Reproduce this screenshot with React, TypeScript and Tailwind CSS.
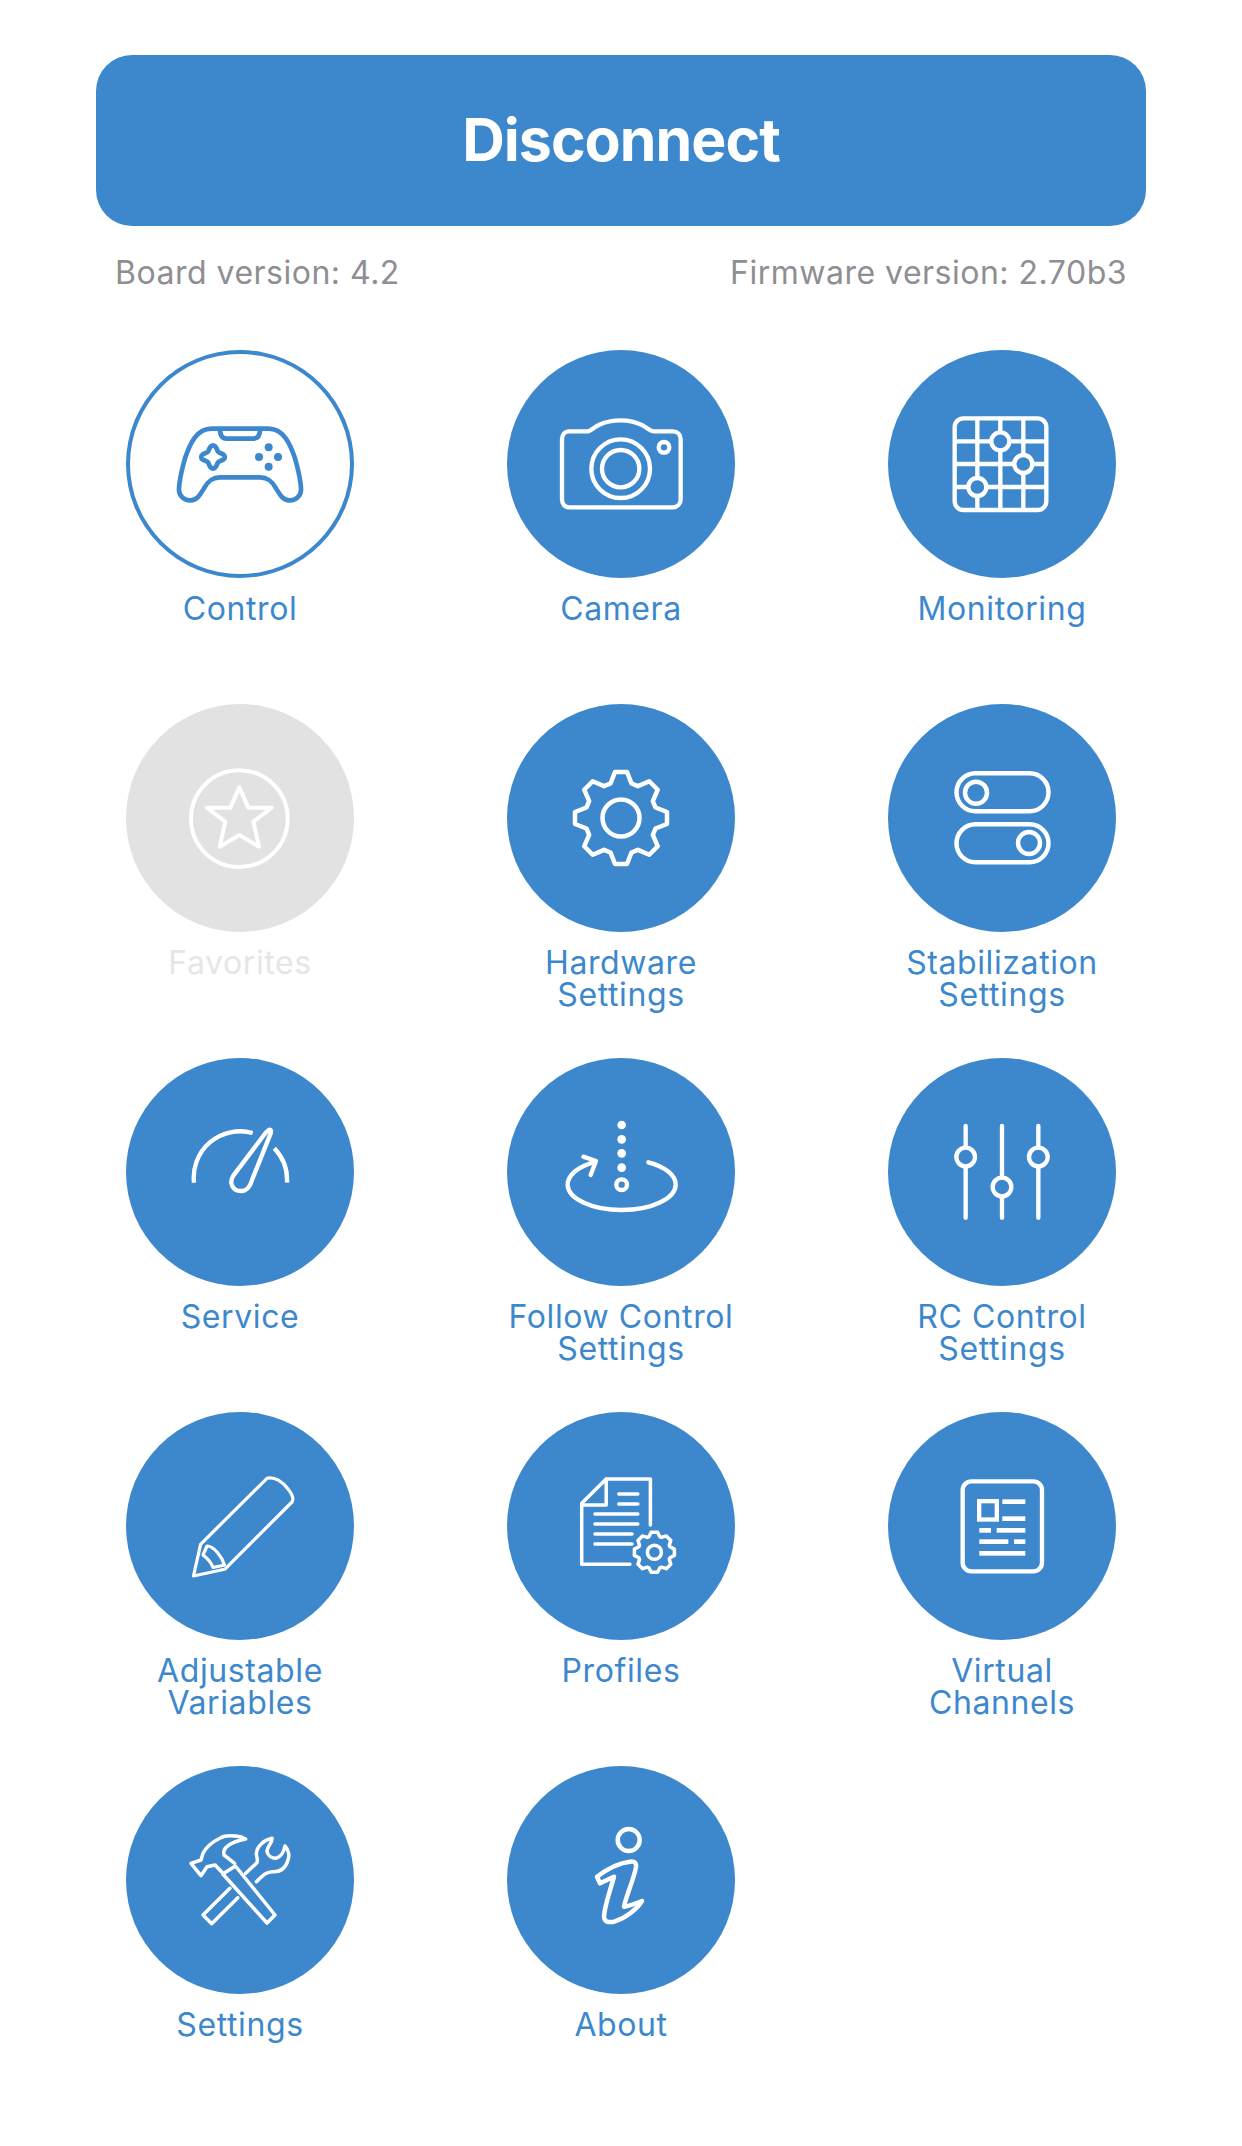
import React from "react";

const BLUE = "#3d88cd";

function gearPath(cx: number, cy: number, ro: number, ri: number, teeth: number, tip: number, base: number) {
  const step = (Math.PI * 2) / teeth;
  const pts: string[] = [];
  for (let i = 0; i < teeth; i++) {
    const a = -Math.PI / 2 + i * step;
    const px = (r: number, o: number) => {
      const x = cx + r * Math.cos(a) - o * Math.sin(a);
      const y = cy + r * Math.sin(a) + o * Math.cos(a);
      return `${x.toFixed(2)} ${y.toFixed(2)}`;
    };
    pts.push(px(ri, -base), px(ro, -tip), px(ro, tip), px(ri, base));
  }
  return "M" + pts.join(" L") + " Z";
}

type SvgProps = { vb?: string; sw?: number; children: React.ReactNode; stroke?: string };
const Svg = ({ vb = "0 0 228 228", sw = 4, children, stroke = "#fff" }: SvgProps) => (
  <svg viewBox={vb} className="h-full w-full" fill="none" stroke={stroke} strokeWidth={sw} strokeLinecap="round" strokeLinejoin="round">
    {children}
  </svg>
);

const Gamepad = () => (
  <Svg vb="18 30 684 684" sw={14} stroke={BLUE}>
    <path d="M275 266H445C490 266 510 310 525 355C535 390 542 425 543 445C545 470 525 482 508 481C490 480 482 468 470 448C458 425 445 412 420 412H300C275 412 262 425 250 448C238 468 230 480 212 481C195 482 175 470 177 445C178 425 185 390 195 355C210 310 230 266 275 266Z" />
    <path d="M300 268C300 288 308 296 320 296H400C412 296 420 288 420 268" />
    <path d="M279 316C288 316 290 325 293 334C296 338 304 340 310 343C316 347 316 355 310 359C304 362 296 364 293 368C290 377 288 386 279 386C270 386 268 377 265 368C262 364 254 362 248 359C242 355 242 347 248 343C254 340 262 338 265 334C268 325 270 316 279 316Z" />
    <g fill={BLUE} stroke="none">
      <circle cx="446" cy="322" r="12" />
      <circle cx="417" cy="351" r="12" />
      <circle cx="474" cy="351" r="12" />
      <circle cx="446" cy="380" r="12" />
    </g>
  </Svg>
);

const Camera = () => (
  <Svg vb="21 30 684 684" sw={13}>
    <path d="M208 274H262C272 274 280 262 298 254C320 244 340 241 362 241C385 241 408 246 428 256C442 264 450 274 462 274H518C532 274 542 284 542 298V478C542 492 532 502 518 502H208C194 502 186 492 186 478V298C186 284 194 274 208 274Z" />
    <circle cx="362" cy="386" r="88" />
    <circle cx="362" cy="386" r="56" />
    <circle cx="492" cy="322" r="16" />
  </Svg>
);

const Monitor = () => (
  <Svg vb="24 30 684 684" sw={13}>
    <rect x="224" y="235" width="275" height="275" rx="26" />
    <path d="M292 235V510M361 235V510M430 235V510M224 304H499M224 372H499M224 441H499" strokeLinecap="butt" />
    <g fill={BLUE}>
      <circle cx="361" cy="304" r="27" />
      <circle cx="430" cy="372" r="27" />
      <circle cx="292" cy="441" r="27" />
    </g>
  </Svg>
);

const Star = () => (
  <Svg vb="18 12 684 684" sw={12}>
    <circle cx="358" cy="356" r="145" />
    <path d="M358 262L385 323L455 323L400 365L417 440L358 405L299 440L316 365L260 323L331 323Z" />
  </Svg>
);

const Gear = () => (
  <Svg sw={4.5}>
    <path d={gearPath(114, 114, 46, 34.5, 8, 6, 10.5)} />
    <circle cx="114" cy="114" r="18.5" />
  </Svg>
);

const Toggles = () => (
  <Svg sw={4.5}>
    <rect x="68.5" y="69.3" width="92" height="38" rx="19" />
    <rect x="68.5" y="120.3" width="92" height="38" rx="19" />
    <circle cx="88" cy="88.7" r="11" />
    <circle cx="141" cy="139" r="11" />
  </Svg>
);

const Gauge = () => (
  <Svg vb="18 9 684 684" sw={13}>
    <path d="M222 383A139 139 0 0 1 398 234M463 280A139 139 0 0 1 501 383" strokeLinecap="butt" />
    <path d="M450 224C445 222 438 232 432 240L340 362C325 385 340 408 362 408C385 408 392 388 398 370L452 235C454 228 453 224 450 224Z" />
  </Svg>
);

const Follow = () => (
  <Svg vb="21 9 684 684" sw={13}>
    <g fill="#fff" stroke="none">
      <circle cx="365" cy="210" r="13" />
      <circle cx="365" cy="253" r="13" />
      <circle cx="365" cy="295" r="13" />
      <circle cx="365" cy="338" r="13" />
    </g>
    <circle cx="365" cy="389" r="16" />
    <path d="M445 322C495 335 527 360 527 389C527 430 455 465 365 465C275 465 203 430 203 389C203 360 235 335 280 322" />
    <path d="M250 305L288 318L272 360" />
  </Svg>
);

const Sliders = () => (
  <Svg vb="24 9 684 684" sw={13}>
    <path d="M257 213V488M366 213V488M475 213V488" />
    <g fill={BLUE}>
      <circle cx="257" cy="306" r="28" />
      <circle cx="366" cy="396" r="28" />
      <circle cx="475" cy="306" r="28" />
    </g>
  </Svg>
);

const Pencil = () => (
  <Svg sw={3.2}>
    <path d="M67.5 164L74.6 132.3L141 66.3C148 64 157 70 162 77C166 82 168 87 166 90L98.7 157.3Z" />
    <path d="M77 143L81 134C88 134 96 145 98.5 153L87 155.5C85 150 81 146 77 143Z" />
  </Svg>
);

const Doc = () => (
  <Svg sw={3.5}>
    <path d="M122.9 152.3H74.7V91.3L99.2 67H143.4V113" />
    <path d="M99.2 67V93H74.7" />
    <path d="M111.8 82H130.8M111.8 92H130.8M88 102H130.8M88 112H130.8M88 122H125M88 132H125" />
    <path d={gearPath(147.4, 140.3, 20, 15.5, 8, 3.2, 5.5)} />
    <circle cx="147.4" cy="140.3" r="7" />
  </Svg>
);

const News = () => (
  <Svg vb="24 6 684 684" sw={13}>
    <rect x="248" y="214" width="238" height="270" rx="26" />
    <rect x="297.5" y="273.5" width="53" height="55" strokeLinejoin="miter" />
    <g fill="#fff" stroke="none">
      <rect x="367" y="268" width="69" height="14" />
      <rect x="367" y="319" width="69" height="14" />
      <rect x="298" y="354" width="35" height="14" />
      <rect x="350" y="354" width="86" height="14" />
      <rect x="298" y="388" width="87" height="14" />
      <rect x="402" y="388" width="34" height="14" />
      <rect x="298" y="423" width="138" height="14" />
    </g>
  </Svg>
);

const Tools = () => (
  <Svg sw={3.5}>
    <path d="M96.8 108L109.4 100L149 149L141 157Z" />
    <path d="M103.9 122.3L77 149L85.7 157.7L111.8 131.7" />
    <path d="M108.6 97.3L98 89C96 82 104 76 119.7 73L114.6 70.7C105 69 99 69 94.8 71.7C86 76 80 81 77 87.3L75 94L65 97.3L75 109.7L81 100.7L89 99L96 106.3" />
    <path d="M119.7 107.3L130.4 97.3C133 94 130 91 130.4 87.3C131 80 138 74 146 72.3C147 76 141 80 141 85.7C142 90 146 92.3 150 92.3C155 91 158 85 159 80C163 84 163.5 90 162 94C160 101 155 105.7 148 105.7C141 105 137 109 130.4 115.7" />
  </Svg>
);

const Info = () => (
  <Svg sw={4.5}>
    <circle cx="121.7" cy="74" r="11" />
    <path d="M90 110.7C100 103 112 97 123 95.7C128 95 129.5 97 129 101C127 113 119 130 117 140.7C122 140 130 137 135 135C130 143 119 152 107 155.7C100 157 97 155 97 150C98 138 104 122 107 110.7L93 117.3Z" />
  </Svg>
);

const items: { label: string[]; icon: React.ReactNode; kind?: "outline" | "off" }[] = [
  { label: ["Control"], icon: <Gamepad />, kind: "outline" },
  { label: ["Camera"], icon: <Camera /> },
  { label: ["Monitoring"], icon: <Monitor /> },
  { label: ["Favorites"], icon: <Star />, kind: "off" },
  { label: ["Hardware", "Settings"], icon: <Gear /> },
  { label: ["Stabilization", "Settings"], icon: <Toggles /> },
  { label: ["Service"], icon: <Gauge /> },
  { label: ["Follow Control", "Settings"], icon: <Follow /> },
  { label: ["RC Control", "Settings"], icon: <Sliders /> },
  { label: ["Adjustable", "Variables"], icon: <Pencil /> },
  { label: ["Profiles"], icon: <Doc /> },
  { label: ["Virtual", "Channels"], icon: <News /> },
  { label: ["Settings"], icon: <Tools /> },
  { label: ["About"], icon: <Info /> },
];

export default function App() {
  return (
    <div className="min-h-[2146px] bg-white font-['Inter',sans-serif]">
      <div className="px-[96px] pt-[55px]">
        <button className="flex h-[171px] w-full items-center justify-center rounded-[36px] bg-[#3d88cd] text-[59px] font-bold tracking-[-1px] text-white">
          Disconnect
        </button>
        <div className="mt-[27px] flex justify-between px-[19px] text-[32px] leading-[40px] tracking-[0.5px] text-[#8e8e93]">
          <span>Board version: 4.2</span>
          <span>Firmware version: 2.70b3</span>
        </div>
      </div>
      <div className="mt-[57px] grid grid-cols-[381px_381px_381px] auto-rows-[354px] px-[49.5px]">
        {items.map((it) => (
          <div key={it.label.join(" ")} className="flex flex-col items-center">
            <div
              className={
                it.kind === "outline"
                  ? "h-[228px] w-[228px] rounded-full bg-white shadow-[inset_0_0_0_4px_#3d88cd]"
                  : it.kind === "off"
                    ? "h-[228px] w-[228px] rounded-full bg-[#e2e2e2]"
                    : "h-[228px] w-[228px] rounded-full bg-[#3d88cd]"
              }
            >
              {it.icon}
            </div>
            <div
              className={
                "mt-[15px] text-center text-[32px] leading-[32px] tracking-[0.6px] " +
                (it.kind === "off" ? "text-[#e6e6e6]" : "text-[#3d88cd]")
              }
            >
              {it.label.map((l, i) => (
                <React.Fragment key={l}>
                  {i > 0 && <br />}
                  {l}
                </React.Fragment>
              ))}
            </div>
          </div>
        ))}
      </div>
    </div>
  );
}
